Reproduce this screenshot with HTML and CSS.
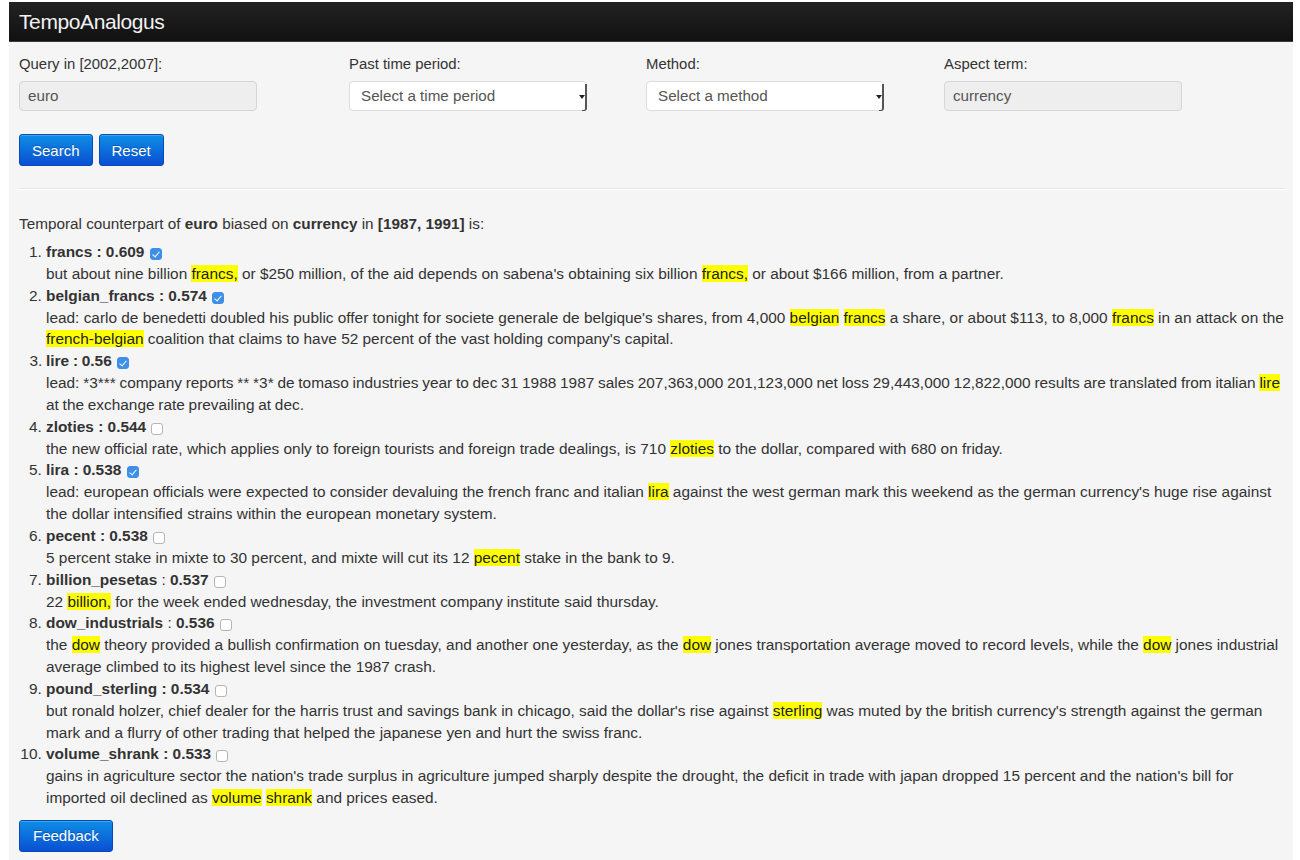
FILE: index.html
```html
<!DOCTYPE html>
<html>
<head>
<meta charset="utf-8">
<title>TempoAnalogus</title>
<link rel="stylesheet" href="styles.css">
</head>
<body>
<div class="page">
  <div class="navbar"><span class="brand">TempoAnalogus</span></div>
  <div class="content">
    <div class="form-row">
      <div class="field">
        <div class="label">Query in [2002,2007]:</div>
        <div class="input disabled">euro</div>
      </div>
      <div class="field">
        <div class="label">Past time period:</div>
        <div class="input select">Select a time period<span class="arrow"></span></div>
      </div>
      <div class="field">
        <div class="label">Method:</div>
        <div class="input select">Select a method<span class="arrow"></span></div>
      </div>
      <div class="field">
        <div class="label">Aspect term:</div>
        <div class="input disabled">currency</div>
      </div>
    </div>
    <div class="buttons">
      <button class="btn small">Search</button>
      <button class="btn small">Reset</button>
    </div>
    <hr class="divider">
    <p class="summary">Temporal counterpart of <b>euro</b> biased on <b>currency</b> in <b>[1987, 1991]</b> is:</p>
    <ol class="results">
      <li><b>francs : 0.609</b> <span class="cb on"></span><br>
        but about nine billion <mark>francs,</mark> or $250 million, of the aid depends on sabena's obtaining six billion <mark>francs,</mark> or about $166 million, from a partner.</li>
      <li><b>belgian_francs : 0.574</b> <span class="cb on"></span><br>
        lead: carlo de benedetti doubled his public offer tonight for societe generale de belgique's shares, from 4,000 <mark>belgian</mark> <mark>francs</mark> a share, or about $113, to 8,000 <mark>francs</mark> in an attack on the <mark>french-belgian</mark> coalition that claims to have 52 percent of the vast holding company's capital.</li>
      <li class="tight"><b>lire : 0.56</b> <span class="cb on"></span><br>
        lead: *3*** company reports ** *3* de tomaso industries year to dec 31 1988 1987 sales 207,363,000 201,123,000 net loss 29,443,000 12,822,000 results are translated from italian <mark>lire</mark> at the exchange rate prevailing at dec.</li>
      <li><b>zloties : 0.544</b> <span class="cb"></span><br>
        the new official rate, which applies only to foreign tourists and foreign trade dealings, is 710 <mark>zloties</mark> to the dollar, compared with 680 on friday.</li>
      <li><b>lira : 0.538</b> <span class="cb on"></span><br>
        lead: european officials were expected to consider devaluing the french franc and italian <mark>lira</mark> against the west german mark this weekend as the german currency's huge rise against the dollar intensified strains within the european monetary system.</li>
      <li><b>pecent : 0.538</b> <span class="cb"></span><br>
        5 percent stake in mixte to 30 percent, and mixte will cut its 12 <mark>pecent</mark> stake in the bank to 9.</li>
      <li><b>billion_pesetas</b> : <b>0.537</b> <span class="cb"></span><br>
        22 <mark>billion,</mark> for the week ended wednesday, the investment company institute said thursday.</li>
      <li><b>dow_industrials</b> : <b>0.536</b> <span class="cb"></span><br>
        the <mark>dow</mark> theory provided a bullish confirmation on tuesday, and another one yesterday, as the <mark>dow</mark> jones transportation average moved to record levels, while the <mark>dow</mark> jones industrial average climbed to its highest level since the 1987 crash.</li>
      <li><b>pound_sterling : 0.534</b> <span class="cb"></span><br>
        but ronald holzer, chief dealer for the harris trust and savings bank in chicago, said the dollar's rise against <mark>sterling</mark> was muted by the british currency's strength against the german mark and a flurry of other trading that helped the japanese yen and hurt the swiss franc.</li>
      <li><b>volume_shrank : 0.533</b> <span class="cb"></span><br>
        gains in agriculture sector the nation's trade surplus in agriculture jumped sharply despite the drought, the deficit in trade with japan dropped 15 percent and the nation's bill for imported oil declined as <mark>volume</mark> <mark>shrank</mark> and prices eased.</li>
    </ol>
    <button class="btn feedback">Feedback</button>
  </div>
</div>
</body>
</html>
```
FILE: styles.css
```css
html, body {
  margin: 0;
  padding: 0;
  background: #ffffff;
  height: 100%;
}
body {
  font-family: "Liberation Sans", Helvetica, Arial, sans-serif;
  font-size: 15.4px;
  color: #333333;
}
.page {
  margin: 2px 7px 0 9px;
  background: #f5f5f5;
  min-height: 858px;
}
.navbar {
  height: 39px;
  background: linear-gradient(#222222, #111111);
  border-bottom: 1px solid #3a3a3a;
  display: flex;
  align-items: center;
  padding-left: 10px;
}
.brand {
  color: #f2f2f2;
  font-size: 21px;
  font-weight: 200;
  letter-spacing: -0.4px;
}
.content {
  padding: 12px 7px 8px 10px;
}
.form-row {
  display: grid;
  grid-template-columns: 330px 297px 298px 1fr;
}
.label {
  font-size: 14.9px;
  line-height: 20px;
  height: 20px;
  margin-bottom: 7px;
}
.input {
  box-sizing: border-box;
  width: 238px;
  height: 30px;
  border: 1px solid #cccccc;
  border-radius: 4px;
  padding: 0 10px;
  font-size: 15.2px;
  line-height: 28px;
  color: #555555;
  position: relative;
}
.input.disabled {
  background: #eeeeee;
  border-color: #d6d6d6;
  padding-left: 8px;
}
.input.select {
  background: #ffffff;
  border-color: #dddddd;
  padding-left: 11px;
}
.arrow {
  position: absolute;
  right: -1px;
  top: 2px;
  bottom: -1px;
  width: 3px;
  border-right: 2px solid #555555;
  border-bottom: 1px solid #555555;
  border-bottom-right-radius: 3px;
}
.arrow::before {
  content: "";
  position: absolute;
  right: 0px;
  top: 11px;
  border-left: 3px solid transparent;
  border-right: 3px solid transparent;
  border-top: 4px solid #222222;
}
.buttons {
  display: flex;
  gap: 6px;
  margin-top: 23px;
}
.btn {
  font-family: "Liberation Sans", Helvetica, Arial, sans-serif;
  font-size: 15px;
  color: #ffffff;
  background: linear-gradient(#0d8ee6, #0a4fd2);
  border: 1px solid #0a49b8;
  border-radius: 3px;
  height: 32px;
  padding: 0 13px;
  text-shadow: 0 -1px 0 rgba(0, 0, 0, 0.25);
  box-shadow: inset 0 1px 0 rgba(255, 255, 255, 0.2);
}
.btn.small {
  padding: 0 12px;
}
.divider {
  margin: 22px 1px 0 0;
  border: 0;
  border-top: 1px solid #e6e6e6;
  border-bottom: 1px solid #ffffff;
}
.summary {
  font-size: 15.3px;
  margin: 23px 0 6px 0;
  line-height: 22px;
}
.results {
  margin: 0;
  padding-left: 27px;
  line-height: 21.85px;
}
.results li.tight {
  word-spacing: -0.5px;
}
mark {
  background: #ffff00;
  color: #222222;
  padding: 0;
}
.cb {
  display: inline-block;
  box-sizing: border-box;
  width: 12px;
  height: 12px;
  border: 1px solid #b5b5b5;
  border-radius: 3px;
  background: #ffffff;
  vertical-align: -3px;
  margin-left: 1px;
  position: relative;
  word-spacing: 0;
}
.cb.on {
  background: #3d8fe8;
  border-color: #3d8fe8;
}
.cb.on::after {
  content: "";
  position: absolute;
  left: 3px;
  top: 1px;
  width: 3px;
  height: 6px;
  border-right: 1.5px solid #ffffff;
  border-bottom: 1.5px solid #ffffff;
  transform: rotate(40deg);
}
.feedback {
  margin-top: 11px;
  padding: 0 13px;
}
```
